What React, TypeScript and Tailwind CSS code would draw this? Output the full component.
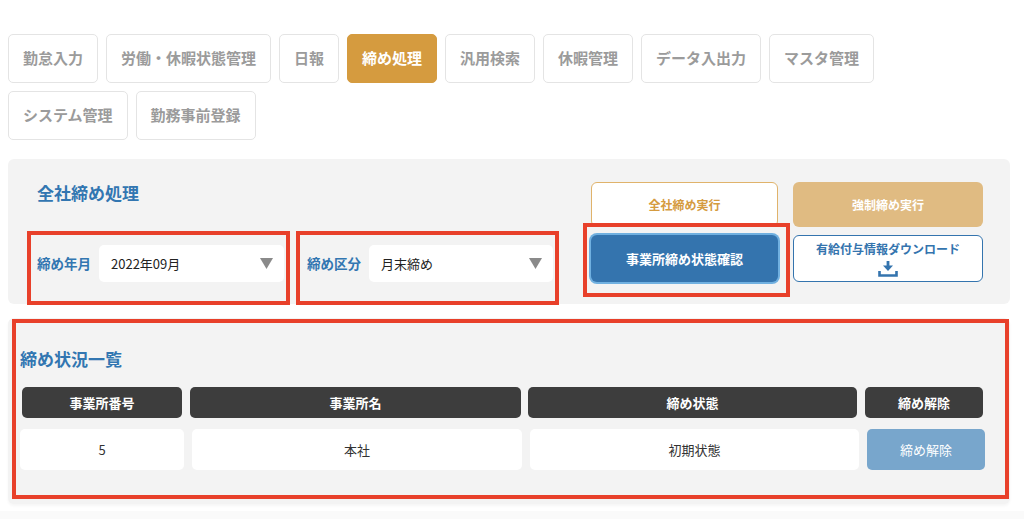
import { ReactNode } from "react";

const tabs = [
  "勤怠入力",
  "労働・休暇状態管理",
  "日報",
  "締め処理",
  "汎用検索",
  "休暇管理",
  "データ入出力",
  "マスタ管理",
  "システム管理",
  "勤務事前登録",
];

const activeTab = "締め処理";

// red annotation frame drawn over the screenshot
function Mark({ className }: { className: string }) {
  return <div className={`pointer-events-none absolute border-4 border-[#e8402a] ${className}`} aria-hidden="true" />;
}

function Arrow() {
  return (
    <svg width="13" height="11" viewBox="0 0 13 11" className="shrink-0">
      <polygon points="0,0 13,0 6.5,11" fill="#8a8a8a" />
    </svg>
  );
}

function SelectField({ label, value, width }: { label: string; value: string; width: string }) {
  return (
    <div className="flex items-center gap-[8px]">
      <span className="text-[13.5px] font-bold text-[#3276b1]">{label}</span>
      <div className={`flex h-[37px] items-center justify-between rounded-[5px] bg-white pl-[12px] pr-[11px] ${width}`}>
        <span className="text-[13px] text-[#222]">{value}</span>
        <Arrow />
      </div>
    </div>
  );
}

function HeadCell({ children, className = "" }: { children: ReactNode; className?: string }) {
  return (
    <div className={`flex h-[31px] items-center justify-center rounded-[5px] bg-[#3d3d3d] text-[13px] font-bold text-white ${className}`}>
      {children}
    </div>
  );
}

function BodyCell({ children }: { children: ReactNode }) {
  return (
    <div className="flex h-[41px] items-center justify-center rounded-[5px] bg-white text-[13px] text-[#333]">
      {children}
    </div>
  );
}

export default function App() {
  return (
    <div className="min-h-[519px] bg-white pt-[34px] font-[Noto_Sans_CJK_JP,Noto_Sans,sans-serif]">
      <div className="pl-[8px] pr-[14px]">
        {/* Tabs */}
        <div className="flex w-[900px] flex-wrap gap-[8px]">
          {tabs.map((t) => {
            const active = t === activeTab;
            return (
              <div
                key={t}
                className={
                  active
                    ? "flex h-[49px] items-center rounded-[5px] border border-[#d59b3f] bg-[#d59b3f] px-[14px] text-[15px] font-bold text-white"
                    : "flex h-[49px] items-center rounded-[5px] border border-[#e4e4e4] bg-white px-[14px] text-[15px] font-bold text-[#9b9b9b]"
                }
              >
                {t}
              </div>
            );
          })}
        </div>

        {/* 全社締め処理 */}
        <div className="relative mt-[19px] flex h-[145px] items-start rounded-[6px] bg-[#f3f3f3]">
          <div className="flex-1 pl-[29px] pt-[22px]">
            <h2 className="text-[17px] font-bold leading-[24px] text-[#3276b1]">全社締め処理</h2>
            <div className="mt-[40px] flex items-center gap-[23px]">
              <SelectField label="締め年月" value="2022年09月" width="w-[185px]" />
              <SelectField label="締め区分" value="月末締め" width="w-[184px]" />
            </div>
          </div>

          <div className="grid grid-cols-[187px_190px] content-start gap-x-[15px] gap-y-[8px] pr-[27px] pt-[23px]">
            <button className="flex h-[45px] items-center justify-center rounded-[6px] border border-[#e0b36b] bg-white text-[12px] font-bold text-[#d59b3f]">
              全社締め実行
            </button>
            <button className="flex h-[45px] items-center justify-center rounded-[6px] bg-[#e0bb82] text-[12px] font-bold text-white">
              強制締め実行
            </button>
            <button className="flex h-[47px] items-center justify-center rounded-[6px] bg-[#3474ae] text-[13px] font-bold text-white ring-2 ring-[#70b0e0]">
              事業所締め状態確認
            </button>
            <button className="flex h-[47px] flex-col items-center justify-center rounded-[6px] border border-[#3474ae] bg-white text-[12px] font-bold text-[#3474ae]">
              <span className="leading-[18px]">有給付与情報ダウンロード</span>
              <svg width="20" height="16" viewBox="0 0 20 16" className="mt-[3px]">
                <rect x="8.6" y="0" width="2.8" height="5" fill="#3474ae" />
                <polygon points="5,4.5 15,4.5 10,10" fill="#3474ae" />
                <path d="M1.5 10 V14.5 H18.5 V10" fill="none" stroke="#3474ae" strokeWidth="2.6" />
              </svg>
            </button>
          </div>

          <Mark className="left-[19px] top-[72px] h-[74px] w-[263px]" />
          <Mark className="left-[288px] top-[72px] h-[74px] w-[263px]" />
          <Mark className="left-[575px] top-[64px] h-[74px] w-[207px]" />
        </div>

        {/* 締め状況一覧 */}
        <div className="relative mt-[14px] rounded-[6px] bg-[#f3f3f3] px-[12px] pb-[34px] pt-[29px] shadow-[0_2px_3px_rgba(0,0,0,0.04)]">
          <h2 className="text-[17px] font-bold leading-[24px] text-[#3276b1]">締め状況一覧</h2>
          <div className="mt-[16px] grid grid-cols-[164px_330px_329px_118px] gap-x-[8px] gap-y-[11px]">
            <HeadCell className="mx-[2px]">事業所番号</HeadCell>
            <HeadCell className="-ml-[2px] mr-[1px]">事業所名</HeadCell>
            <HeadCell className="-ml-[2px] mr-[2px]">締め状態</HeadCell>
            <HeadCell className="-ml-[2px] mr-[2px]">締め解除</HeadCell>
            <BodyCell>5</BodyCell>
            <BodyCell>本社</BodyCell>
            <BodyCell>初期状態</BodyCell>
            <button className="flex h-[41px] items-center justify-center rounded-[5px] bg-[#78a6cc] text-[13px] text-white">
              締め解除
            </button>
          </div>
          <Mark className="left-[4px] top-[1px] h-[180px] w-[997px]" />
        </div>
      </div>
      <div className="mt-[7px] h-[20px] bg-[#fafafa]" />
    </div>
  );
}
